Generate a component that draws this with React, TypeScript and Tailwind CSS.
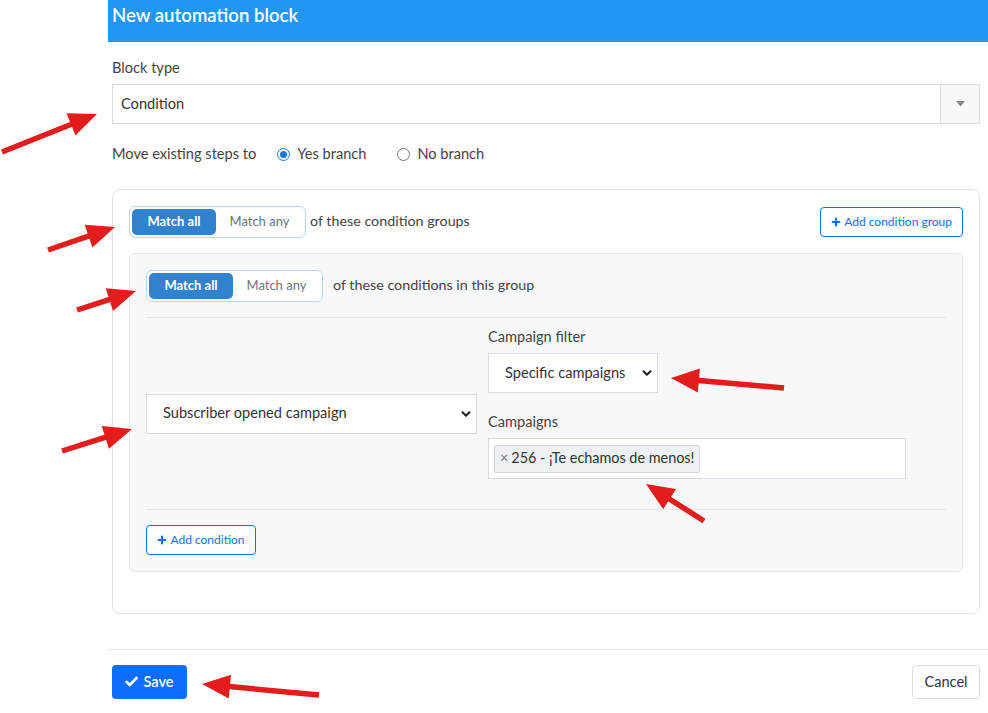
import React from "react";

const RED = "#e31c1c";
const ARROWS: [number, number, number, number][] = [
  [2, 152, 97, 114],
  [48, 250, 115, 227],
  [77, 310, 136, 291],
  [62, 451, 132, 429],
  [784, 388, 671, 378],
  [704, 521, 646, 484],
  [319, 695, 202, 684],
];

function Arrow({ a }: { a: [number, number, number, number] }) {
  const [x1, y1, x2, y2] = a;
  const dx = x2 - x1;
  const dy = y2 - y1;
  const L = Math.hypot(dx, dy);
  const ux = dx / L;
  const uy = dy / L;
  const nx = -uy;
  const ny = ux;
  const hl = 28;
  const hw = 12;
  const bx = x2 - ux * hl;
  const by = y2 - uy * hl;
  const pts = `${x2},${y2} ${bx + nx * hw},${by + ny * hw} ${bx - nx * hw},${by - ny * hw}`;
  return (
    <g>
      <line x1={x1} y1={y1} x2={bx + ux * 3} y2={by + uy * 3} stroke={RED} strokeWidth={5.5} />
      <polygon points={pts} fill={RED} />
    </g>
  );
}

function Chevron() {
  return (
    <svg width="12" height="12" viewBox="0 0 12 12">
      <path d="M2.5 4.2 L6 7.7 L9.5 4.2" fill="none" stroke="#222" strokeWidth="2" strokeLinecap="round" strokeLinejoin="round" />
    </svg>
  );
}

function Plus({ color }: { color: string }) {
  return (
    <svg width="10" height="10" viewBox="0 0 10 10">
      <path d="M5 0.8 V9.2 M0.8 5 H9.2" stroke={color} strokeWidth="2.2" />
    </svg>
  );
}

function Toggle() {
  return (
    <div className="h-[32px] w-[177px] border border-[#b9d5f1] rounded-[6px] p-[2px] flex bg-white">
      <div className="w-[84px] h-[26px] bg-[#3182ce] rounded-[5px] text-white font-bold text-[13px] flex items-center justify-center">
        Match all
      </div>
      <div className="flex-1 flex items-center justify-center text-[13px] text-[#6b7280]">Match any</div>
    </div>
  );
}

export default function App() {
  return (
    <div className="relative w-[988px] h-[713px] overflow-hidden bg-white font-[Lato,sans-serif] text-[#333]">
      <div className="ml-[108px] w-[880px]">
        <div className="h-[42px] bg-[#2196f3] pl-[4px] pb-[10px] flex items-center">
          <span className="text-white text-[18.6px] font-semibold">New automation block</span>
        </div>
        <div className="pl-[4px] pr-[8px] pt-[16px] pb-[35px]">
          <div className="text-[14.6px] leading-[20px] text-[#444] mb-[6px]">Block type</div>
          <div className="h-[40px] border border-[#d9dce3] flex">
            <div className="flex-1 flex items-center pl-[8px] pb-[1px] text-[14.6px] text-[#333]">Condition</div>
            <div className="w-[39px] border-l border-[#d9dce3] bg-[#f7f8fa] flex items-center justify-center">
              <svg width="9" height="6" viewBox="0 0 9 6">
                <path d="M0 0 H9 L4.5 5.5 Z" fill="#888" />
              </svg>
            </div>
          </div>

          <div className="mt-[20px] h-[20px] flex items-center text-[14.6px] text-[#444]">
            <span className="pb-[1px]">Move existing steps to</span>
            <span className="ml-[21px] w-[13px] h-[13px] rounded-full border-[1.5px] border-[#1a73e8] flex items-center justify-center">
              <span className="w-[7px] h-[7px] rounded-full bg-[#1a73e8]" />
            </span>
            <span className="ml-[7px] pb-[1px]">Yes branch</span>
            <span className="ml-[31px] w-[13px] h-[13px] rounded-full border border-[#767676]" />
            <span className="ml-[7px] pb-[1px]">No branch</span>
          </div>

          <div className="mt-[25px] border border-[#dee2e6] rounded-[8px] p-[16px]">
            <div className="flex items-center justify-between">
              <div className="flex items-center">
                <Toggle />
                <span className="ml-[4px] pb-[2px] text-[14.3px] text-[#444]">of these condition groups</span>
              </div>
              <button className="h-[30px] px-[10px] border border-[#0d6efd] rounded-[4px] text-[#0d6efd] text-[12px] flex items-center gap-[3px] bg-white">
                <Plus color="#0d6efd" />
                <span>Add condition group</span>
              </button>
            </div>

            <div className="mt-[15px] mb-[25px] bg-[#f7f8fa] border border-[#e3e6ea] rounded-[6px] p-[16px]">
              <div className="flex items-center">
                <Toggle />
                <span className="ml-[10px] pb-[2px] text-[14.3px] text-[#444]">of these conditions in this group</span>
              </div>
              <div className="mt-[15px] border-t border-[#e5e7eb]" />
              <div className="flex items-center gap-[11px] py-[9px]">
                <div className="w-[331px] h-[40px] border border-[#d9dce3] bg-white flex items-center justify-between pl-[16px] pr-[4px] text-[14.6px]">
                  <span className="pb-[1px]">Subscriber opened campaign</span>
                  <Chevron />
                </div>
                <div className="pb-[21px]">
                  <div className="text-[14.6px] leading-[19px] text-[#444] mb-[7px]">Campaign filter</div>
                  <div className="w-[170px] h-[40px] border border-[#d9dce3] bg-white flex items-center justify-between pl-[16px] pr-[4px] text-[14.6px]">
                    <span className="pb-[1px]">Specific campaigns</span>
                    <Chevron />
                  </div>
                  <div className="mt-[19px] text-[14.6px] leading-[19px] text-[#444] mb-[7px]">Campaigns</div>
                  <div className="w-[418px] h-[41px] border border-[#d9dce3] bg-white p-[5px] flex items-center">
                    <span className="h-[28px] px-[5px] pb-[1px] bg-[#eef0f4] border border-[#cfd4dc] rounded-[2px] flex items-center text-[14.4px] text-[#333]">
                      <span className="text-[#777] mr-[3px]">×</span>256 - ¡Te echamos de menos!
                    </span>
                  </div>
                </div>
              </div>
              <div className="border-t border-[#e5e7eb]" />
              <button className="mt-[15px] h-[30px] w-[110px] border border-[#0d6efd] rounded-[4px] text-[#0d6efd] text-[12px] flex items-center justify-center gap-[3px] bg-white">
                <Plus color="#0d6efd" />
                <span>Add condition</span>
              </button>
            </div>
          </div>
        </div>
        <div className="border-t border-[#e5e7eb] pt-[15px] pl-[4px] pr-[8px] flex justify-between">
          <button className="h-[34px] w-[75px] bg-[#0d6efd] rounded-[4px] text-white text-[14.6px] font-semibold flex items-center justify-center gap-[5px] pb-[1px]">
            <svg width="13" height="11" viewBox="0 0 13 11">
              <path d="M1.5 5.8 L4.8 9 L11.5 2" fill="none" stroke="#fff" strokeWidth="2.6" strokeLinecap="round" strokeLinejoin="round" />
            </svg>
            <span>Save</span>
          </button>
          <button className="h-[34px] w-[68px] border border-[#d6dbe1] rounded-[4px] text-[14.6px] text-[#333] bg-white pb-[1px]">
            Cancel
          </button>
        </div>
      </div>
      <svg className="absolute inset-0 pointer-events-none" width="988" height="713" viewBox="0 0 988 713">
        {ARROWS.map((a, i) => (
          <Arrow key={i} a={a} />
        ))}
      </svg>
    </div>
  );
}
